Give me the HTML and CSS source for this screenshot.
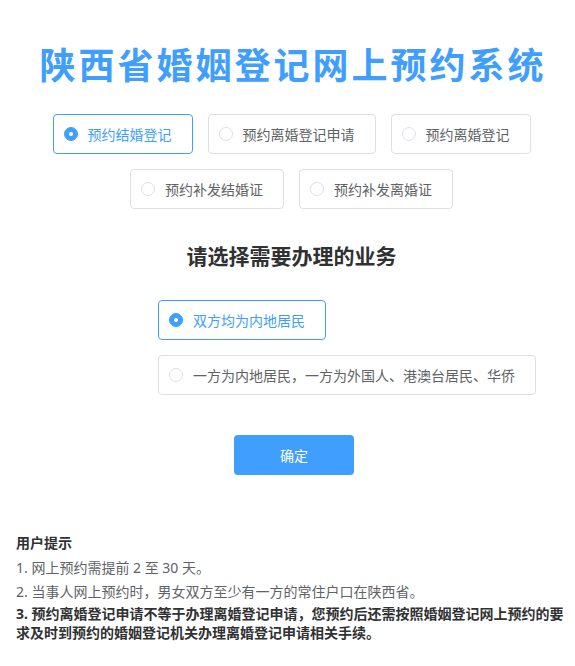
FILE: index.html
```html
<!DOCTYPE html>
<html lang="zh-CN">
<head>
<meta charset="utf-8">
<title>陕西省婚姻登记网上预约系统</title>
<link rel="stylesheet" href="styles.css">
</head>
<body>
<div class="page">
  <h1 class="title">陕西省婚姻登记网上预约系统</h1>
  <div class="type-group">
    <label class="radio is-checked"><span class="radio-inner"></span><span class="radio-label">预约结婚登记</span></label>
    <label class="radio"><span class="radio-inner"></span><span class="radio-label">预约离婚登记申请</span></label>
    <label class="radio"><span class="radio-inner"></span><span class="radio-label">预约离婚登记</span></label>
    <label class="radio"><span class="radio-inner"></span><span class="radio-label">预约补发结婚证</span></label>
    <label class="radio"><span class="radio-inner"></span><span class="radio-label">预约补发离婚证</span></label>
  </div>
  <h2 class="subtitle">请选择需要办理的业务</h2>
  <div class="biz-group">
    <label class="radio is-checked"><span class="radio-inner"></span><span class="radio-label">双方均为内地居民</span></label>
    <label class="radio"><span class="radio-inner"></span><span class="radio-label">一方为内地居民，一方为外国人、港澳台居民、华侨</span></label>
  </div>
  <div class="actions">
    <button class="btn-primary" type="button">确定</button>
  </div>
</div>
<div class="tips">
  <div class="tips-title">用户提示</div>
  <p class="tip tip-1">1. 网上预约需提前 2 至 30 天。</p>
  <p class="tip tip-2">2. 当事人网上预约时，男女双方至少有一方的常住户口在陕西省。</p>
  <p class="tip tip-3 strong">3. 预约离婚登记申请不等于办理离婚登记申请，您预约后还需按照婚姻登记网上预约的要求及时到预约的婚姻登记机关办理离婚登记申请相关手续。</p>
</div>
</body>
</html>
```
FILE: styles.css
```css
* { box-sizing: border-box; }
html, body {
  margin: 0;
  padding: 0;
  background: #ffffff;
}
body {
  font-family: "Noto Sans CJK SC", "Noto Sans", "Liberation Sans", sans-serif;
  font-size: 14px;
  color: #606266;
}
.page {
  padding-left: 8px;
}
.title {
  margin: 0;
  padding-top: 38px;
  font-size: 36px;
  line-height: 50px;
  font-weight: 700;
  letter-spacing: 3px;
  text-indent: 3px;
  text-align: center;
  color: #409eff;
}
.type-group {
  margin-top: 26px;
  display: flex;
  flex-wrap: wrap;
  justify-content: center;
  gap: 15px;
}
.radio {
  display: inline-flex;
  align-items: center;
  height: 40px;
  padding: 0 20px 0 10px;
  border: 1px solid #dcdfe6;
  border-radius: 4px;
  background: #fff;
  color: #606266;
  cursor: pointer;
  white-space: nowrap;
}
.radio-inner {
  width: 14px;
  height: 14px;
  border: 1px solid #dcdfe6;
  border-radius: 50%;
  background: #fff;
  display: inline-flex;
  align-items: center;
  justify-content: center;
  flex: none;
}
.radio-label {
  padding-left: 10px;
  font-size: 14px;
  line-height: 20px;
}
.radio.is-checked {
  border-color: #409eff;
}
.radio.is-checked .radio-inner {
  background: #409eff;
  border-color: #409eff;
}
.radio.is-checked .radio-inner::after {
  content: "";
  width: 4px;
  height: 4px;
  border-radius: 50%;
  background: #fff;
}
.radio.is-checked .radio-label {
  color: #409eff;
}
.subtitle {
  margin: 31px 0 0;
  font-size: 21px;
  line-height: 30px;
  font-weight: 700;
  text-align: center;
  color: #303133;
}
.biz-group {
  margin: 30px 0 0 150px;
  display: flex;
  flex-direction: column;
  align-items: flex-start;
  gap: 15px;
}
.actions {
  margin: 40px 0 0 226px;
}
.btn-primary {
  width: 120px;
  height: 40px;
  border: none;
  border-radius: 4px;
  background: #409eff;
  color: #fff;
  font-family: inherit;
  font-size: 14px;
  padding: 0;
}
.tips {
  margin-top: 58px;
  padding: 0 4px 0 16px;
  font-family: "Noto Sans", "Noto Sans CJK SC", sans-serif;
}
.tips-title {
  font-size: 14px;
  line-height: 20px;
  font-weight: 700;
  color: #303133;
}
.tip {
  margin: 0;
  font-size: 14px;
  line-height: 20px;
  color: #606266;
}
.tip-1 { margin-top: 5px; }
.tip-2 { margin-top: 4px; }
.tip-3 { margin-top: 2px; line-height: 19px; }
.strong {
  font-weight: 700;
  color: #303133;
}
```
